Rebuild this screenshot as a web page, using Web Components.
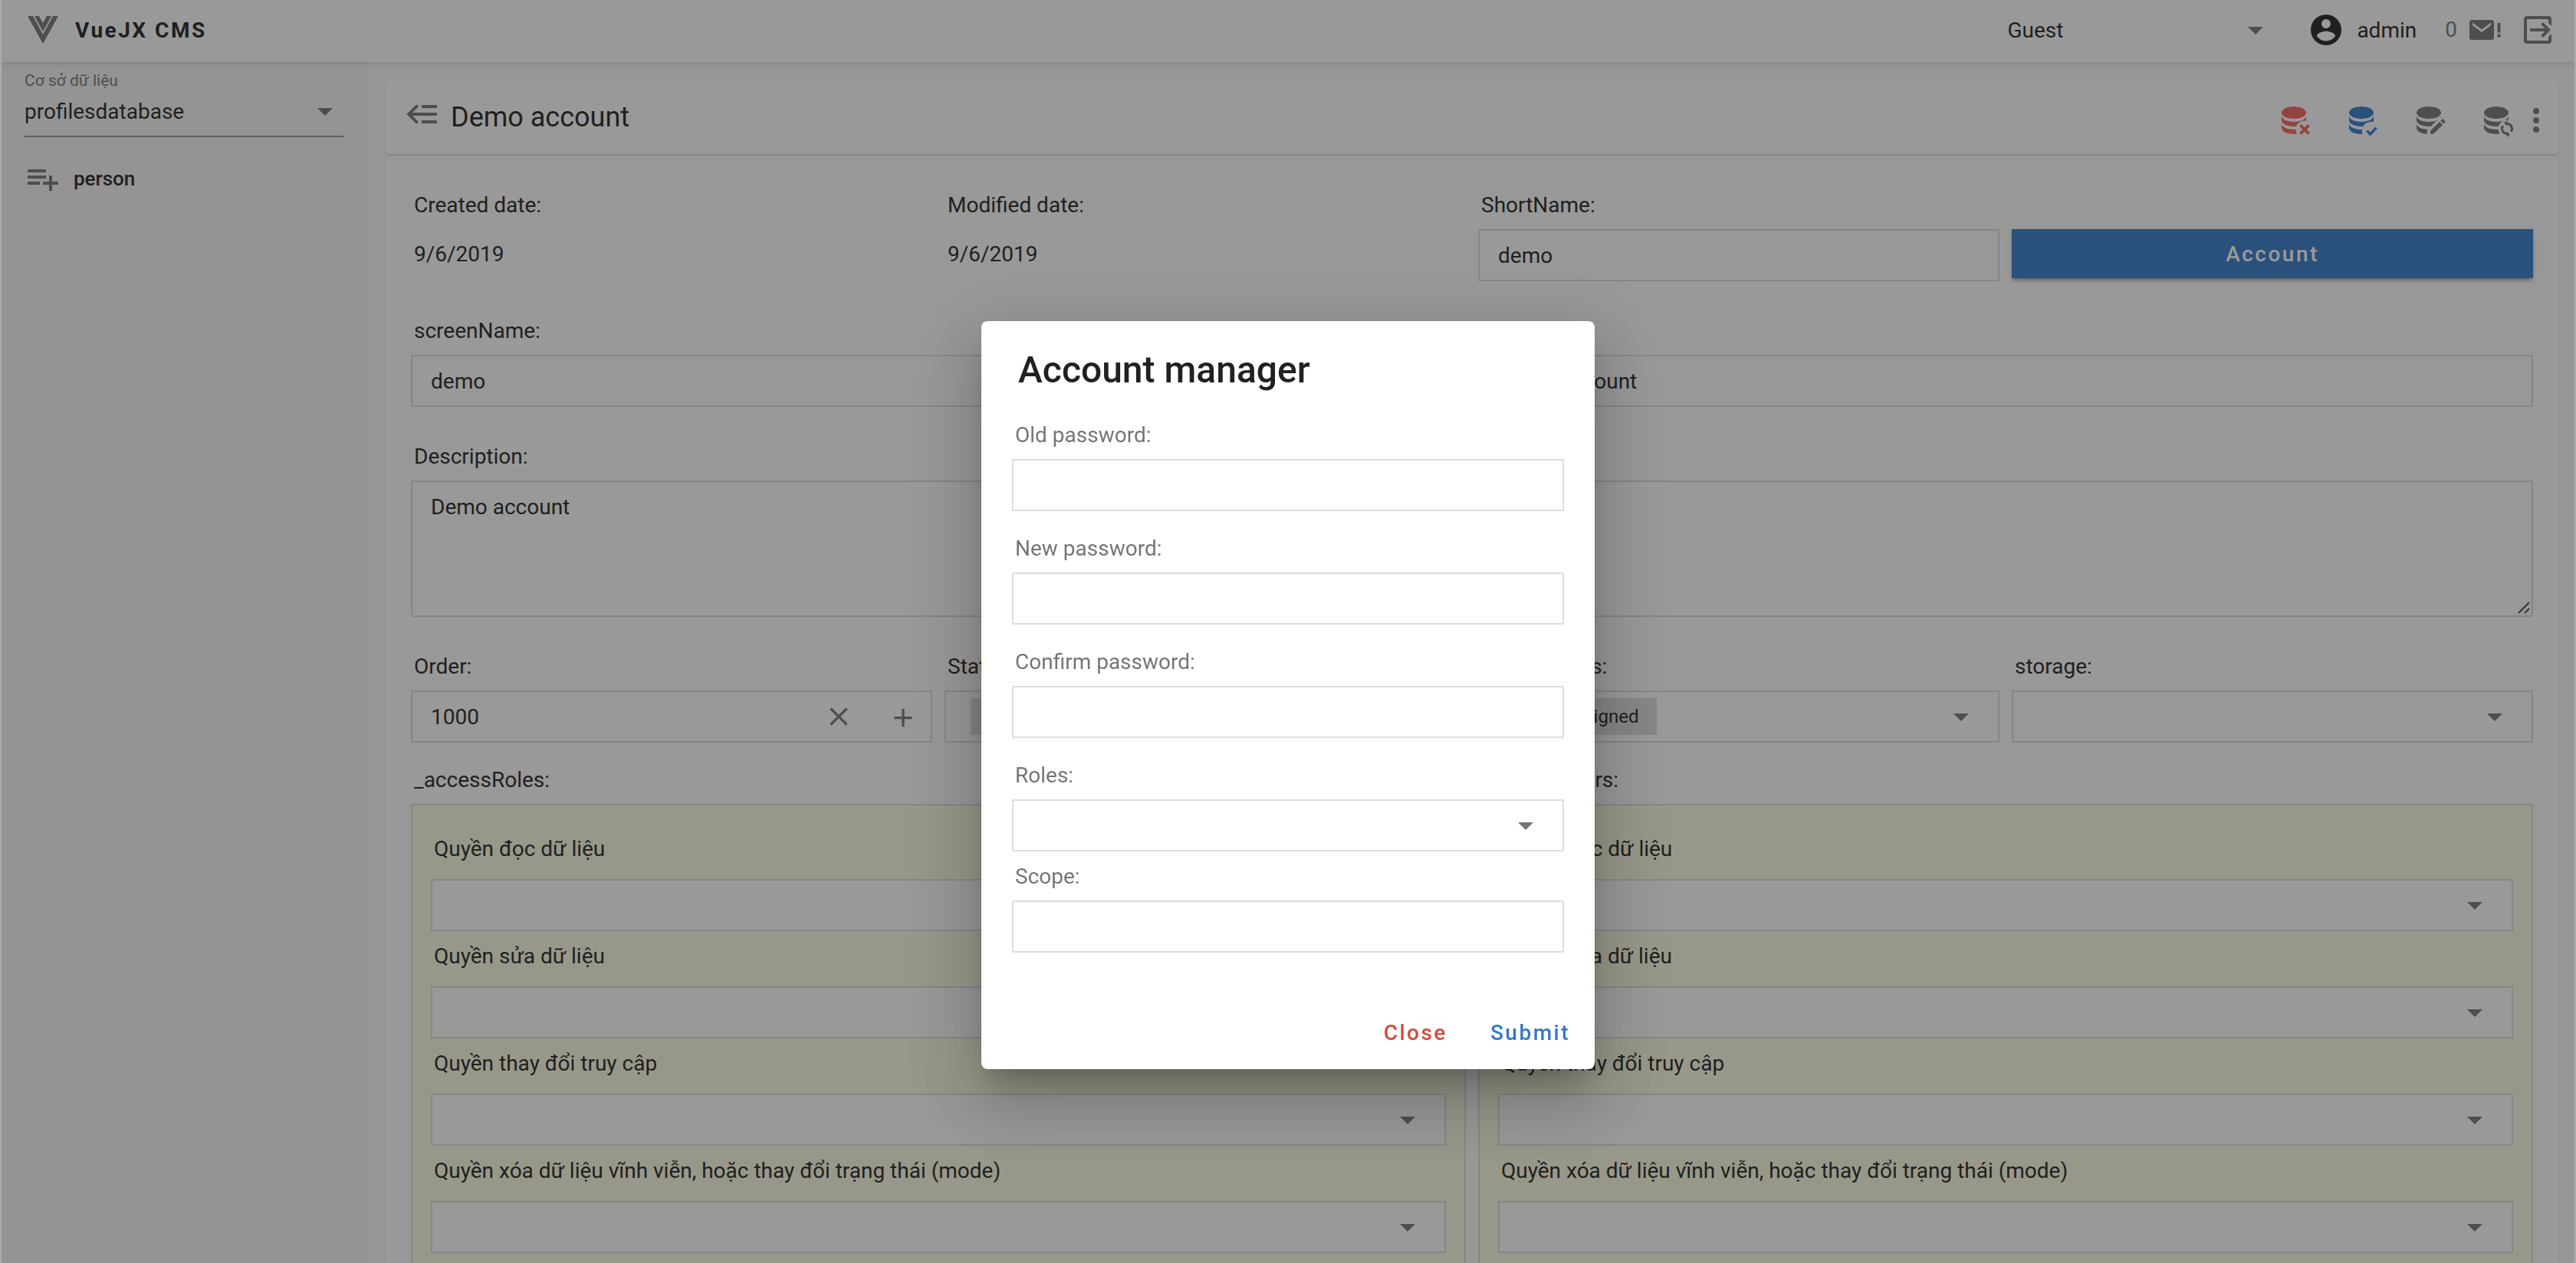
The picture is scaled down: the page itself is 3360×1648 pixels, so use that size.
<!DOCTYPE html>
<html lang="vi">
<head>
<meta charset="utf-8">
<meta name="viewport" content="width=device-width, initial-scale=1">
<title>VueJX CMS</title>
<style>
  html, body { height: 100%; }
  body { margin: 0; background: #ababab; overflow: hidden; font-family: Roboto, "Noto Sans", sans-serif; font-size: 28px; line-height: 32px; color: #212121; }
</style>
</head>
<body>
<cms-app></cms-app>
<script>
const define = (name, css, html, hook) => {
  const tpl = document.createElement('template');
  tpl.innerHTML = `<style>*,*::before,*::after{box-sizing:border-box}${css}</style>${html}`;
  customElements.define(name, class extends HTMLElement {
    constructor() {
      super();
      this.attachShadow({ mode: 'open' }).append(tpl.content.cloneNode(true));
    }
    connectedCallback() {
      if (this.ready) return;
      this.ready = true;
      if (hook) hook(this, this.shadowRoot);
    }
  });
};

/* ---------- icons ---------- */
const DB = 'M12,3C7.58,3 4,4.79 4,7C4,9.21 7.58,11 12,11C16.42,11 20,9.21 20,7C20,4.79 16.42,3 12,3M4,9V12C4,14.21 7.58,16 12,16C16.42,16 20,14.21 20,12V9C20,11.21 16.42,13 12,13C7.58,13 4,11.21 4,9M4,14V17C4,19.21 7.58,21 12,21C16.42,21 20,19.21 20,17V14C20,16.21 16.42,18 12,18C7.58,18 4,16.21 4,14Z';
const db = (cut, badge) => `<mask id="m" maskUnits="userSpaceOnUse" x="0" y="0" width="24" height="24"><rect width="24" height="24" fill="#fff"/><g fill="#000">${cut}</g></mask><path mask="url(#m)" d="${DB}"/>${badge}`;
const ICONS = {
  vue: ['0 0 24 24', '<path d="M2,3H5.5L12,15L18.5,3H22L12,21L2,3M6.5,3H9.5L12,7.58L14.44,3H17.5L12,13.08L6.5,3Z"/>'],
  down: ['0 0 24 24', '<path d="M7,10L12,15L17,10H7Z"/>'],
  playlist: ['0 0 24 24', '<path d="M2,16H10V14H2M18,14V10H16V14H12V16H16V20H18V16H22V14M14,6H2V8H14M14,10H2V12H14V10Z"/>'],
  back: ['0 0 24 24', '<path d="M5,13L9,17L7.6,18.42L1.18,12L7.6,5.58L9,7L5,11H21V13H5M21,6V8H11V6H21M21,16V18H11V16H21Z"/>'],
  account: ['0 0 24 24', '<path d="M12,19.2C9.5,19.2 7.29,17.92 6,16C6.03,14 10,12.9 12,12.9C14,12.9 17.97,14 18,16C16.71,17.92 14.5,19.2 12,19.2M12,5A3,3 0 0,1 15,8A3,3 0 0,1 12,11A3,3 0 0,1 9,8A3,3 0 0,1 12,5M12,2A10,10 0 0,0 2,12A10,10 0 0,0 12,22A10,10 0 0,0 22,12C22,6.47 17.5,2 12,2Z"/>'],
  close: ['0 0 24 24', '<path d="M19,6.41L17.59,5L12,10.59L6.41,5L5,6.41L10.59,12L5,17.59L6.41,19L12,13.41L17.59,19L19,17.59L13.41,12L19,6.41Z"/>'],
  plus: ['0 -1 24 24', '<path d="M19,13H13V19H11V13H5V11H11V5H13V11H19V13Z"/>'],
  dots: ['0 0 24 24', '<circle cx="12" cy="6" r="2"/><circle cx="12" cy="12" r="2"/><circle cx="12" cy="18" r="2"/>'],
  mail: ['0 0 41 26', '<path fill-rule="evenodd" d="M3,0H29A3,3 0 0 1 32,3V23A3,3 0 0 1 29,26H3A3,3 0 0 1 0,23V3A3,3 0 0 1 3,0ZM4,3.6V7L16,16L28,7V3.6L16,12.6Z"/><path d="M36.5,4H40.5V16.5H36.5ZM36.5,18.5H40.5V22.5H36.5Z"/>'],
  logout: ['0 0 36 36', '<path d="M4,0H32A4,4 0 0 1 36,4V13L32,9V4H4V32H32V27L36,23V32A4,4 0 0 1 32,36H4A4,4 0 0 1 0,32V4A4,4 0 0 1 4,0Z"/><path d="M8,16H27.5L22.2,10.7L25,8L35,18L25,28L22.2,25.3L27.5,20H8Z"/>'],
  dbRemove: ['0 0 24 24', db('<circle cx="19" cy="18" r="5.8"/>', '<path d="M16.2,15.2L21.8,20.8M21.8,15.2L16.2,20.8" stroke="currentColor" stroke-width="1.9" fill="none"/>')],
  dbCheck: ['0 0 24 24', db('<circle cx="18.5" cy="19" r="6.1"/>', '<path d="M15.7,18.8L17.8,21L21.8,16.9" stroke="currentColor" stroke-width="1.7" fill="none"/>')],
  dbEdit: ['0 0 24 24', db('<path d="M11,24V18.4L19.2,10.2H24V24Z"/>', '<path transform="translate(1,-.3)" d="M21.7,13.58L20.7,14.58L18.65,12.53L19.65,11.53C19.86,11.32 20.21,11.32 20.42,11.53L21.7,12.81C21.91,13.02 21.91,13.37 21.7,13.58M12,19.19L18.06,13.12L20.11,15.17L14.06,21.23H12V19.19Z"/>')],
  dbSync: ['0 0 24 24', db('<circle cx="19" cy="17.5" r="5.7"/>', '<path d="M19,14.3A3.2,3.2 0 0 1 21.6,19.4M19,20.7A3.2,3.2 0 0 1 16.4,15.6" stroke="currentColor" stroke-width="1.5" fill="none"/><path d="M19.2,12V15.8L17,13.9ZM18.8,19.2V23L21,21.1Z"/>')]
};
define('mdi-icon', `
  :host{display:block;flex:none;width:48px;height:48px;color:#757575;pointer-events:none}
  :host([size="40"]){width:40px;height:40px}
  :host([name="mail"]){width:41px;height:26px}
  :host([name="logout"]){width:36px;height:36px}
  svg{display:block;width:100%;height:100%;fill:currentColor}`,
  `<svg aria-hidden="true"></svg>`,
  (el, root) => {
    const [box, body] = ICONS[el.getAttribute('name')];
    const svg = root.querySelector('svg');
    svg.setAttribute('viewBox', box);
    svg.innerHTML = body;
  });

const RESET = `button,input,select,textarea{font:inherit;color:inherit;background:none;border:0;border-radius:0;margin:0;padding:0;outline:0;appearance:none}
  button{display:block;cursor:pointer} select{cursor:pointer}`;

/* ---------- form fields ---------- */
define('form-field', `${RESET}
  :host{display:flex;flex-direction:column;gap:14px;min-width:0}
  label{padding-left:4px;line-height:34px;white-space:nowrap}
  :host([muted]) label{color:#757575}
  :host([wide-gap]){gap:22px}
  .box{display:flex;align-items:center;height:68px;background:#fff;border:2px solid #ddd;padding-left:24px}
  .box>input,.box>select{flex:1;min-width:0;height:100%}
  .box>mdi-icon{margin-right:24px}
  .actions{display:flex;gap:44px;padding-right:16px}
  .chip{background:#ddd;padding:8px 24px;margin:0 8px;font-size:24px;white-space:nowrap}
  .area{height:178px;padding:0}
  textarea{flex:1;height:100%;padding:16px 24px;line-height:34px;resize:none}
  .grip{align-self:flex-end;width:16px;height:16px;margin:0 2px 2px 0}
  output{display:flex;align-items:center;height:66px;padding-left:4px}`,
  `<label for="c"></label>`,
  (el, root) => {
    const kind = el.getAttribute('kind') || 'text';
    const value = el.getAttribute('value') || '';
    root.querySelector('label').textContent = el.getAttribute('label');
    const arrow = '<mdi-icon name="down"></mdi-icon>';
    const box = document.createElement('div');
    box.className = 'box';
    if (kind === 'date') {
      const out = document.createElement('output');
      out.id = 'c';
      out.textContent = value;
      root.append(out);
      return;
    }
    if (kind === 'select') box.innerHTML = `<select id="c"><option></option></select>${arrow}`;
    if (kind === 'chips') box.innerHTML = `<span class="chip">${value}</span><select id="c"><option></option></select>${arrow}`;
    if (kind === 'text') box.innerHTML = `<input id="c" type="text">`;
    if (kind === 'password') box.innerHTML = `<input id="c" type="password">`;
    if (kind === 'number') box.innerHTML = `<input id="c" type="text" inputmode="numeric"><div class="actions"><button aria-label="Clear"><mdi-icon name="close" size="40"></mdi-icon></button><button aria-label="Add"><mdi-icon name="plus" size="40"></mdi-icon></button></div>`;
    if (kind === 'area') {
      box.classList.add('area');
      box.innerHTML = `<textarea id="c"></textarea><svg class="grip" viewBox="0 0 16 16"><path d="M1,15L15,1M9,15L15,9" stroke="#444" stroke-width="2"/></svg>`;
    }
    const field = box.querySelector('input,textarea');
    if (field) field.value = value;
    root.append(box);
  });

define('solid-button', `${RESET}
  :host{display:flex}
  button{flex:1;height:64px;margin-top:48px;padding-top:2px;background:#3378c9;color:#fff;font-weight:500;letter-spacing:2.5px;
    box-shadow:0 6px 2px -4px rgba(0,0,0,.2),0 4px 4px rgba(0,0,0,.14),0 2px 10px rgba(0,0,0,.12)}`,
  `<button><slot></slot></button>`);

define('text-button', `${RESET}
  :host{display:block;color:#3378c9}
  :host([danger]){color:#d9463b}
  button{height:72px;padding:2px 16px 0;font-weight:500;letter-spacing:2.5px}`,
  `<button><slot></slot></button>`);

/* ---------- role panel ---------- */
define('role-panel', `
  :host{display:flex;flex-direction:column;gap:14px;min-width:0}
  h3{margin:0;font:inherit;line-height:34px;padding-left:4px}
  .panel{display:flex;flex-direction:column;gap:16px;background:#fdfde3;border:2px solid #ddd;padding:40px 24px}`,
  `<h3></h3>
  <div class="panel">
    <form-field wide-gap kind="select" label="Quyền đọc dữ liệu"></form-field>
    <form-field wide-gap kind="select" label="Quyền sửa dữ liệu"></form-field>
    <form-field wide-gap kind="select" label="Quyền thay đổi truy cập"></form-field>
    <form-field wide-gap kind="select" label="Quyền xóa dữ liệu vĩnh viễn, hoặc thay đổi trạng thái (mode)"></form-field>
  </div>`,
  (el, root) => { root.querySelector('h3').textContent = el.getAttribute('label'); });

/* ---------- top bar ---------- */
define('cms-topbar', `${RESET}
  :host{display:flex;align-items:center;height:81px;padding:0 30px 3px;background:#fff;position:relative;z-index:1;
    box-shadow:0 2px 8px rgba(0,0,0,.14)}
  h1{margin:0 auto 0 18px;padding-top:2px;font-size:28px;line-height:32px;font-weight:700;letter-spacing:2.5px}
  .lang{display:flex;align-items:center;width:348px;margin-right:44px}
  .lang select{flex:1;height:48px;margin-right:-48px;padding:2px 48px 0 0}
  .user{display:flex;align-items:center;gap:16px;margin-right:37px}
  .user mdi-icon{color:#212121}
  .user span{padding-top:2px}
  .mail{display:flex;align-items:center;gap:16px;color:#757575;margin-right:30px}`,
  `<mdi-icon name="vue"></mdi-icon>
  <h1>VueJX CMS</h1>
  <div class="lang"><select aria-label="Site"><option>Guest</option></select><mdi-icon name="down"></mdi-icon></div>
  <div class="user"><mdi-icon name="account"></mdi-icon><span>admin</span></div>
  <button class="mail" aria-label="Messages"><span>0</span><mdi-icon name="mail"></mdi-icon></button>
  <button aria-label="Logout"><mdi-icon name="logout"></mdi-icon></button>`);

/* ---------- side bar ---------- */
define('cms-sidebar', `${RESET}
  :host{display:block;width:478px;flex:none;background:#f5f5f5;padding:12px 32px 0 30px}
  label{display:block;font-size:21px;line-height:24px;color:#757575}
  .db{display:flex;align-items:center;padding-bottom:4px;border-bottom:2px solid #949494}
  .db select{flex:1;height:56px;margin-right:-48px;padding:2px 48px 0 0}
  a{display:flex;align-items:center;gap:16px;margin-top:30px;font-size:26px;font-weight:500;color:inherit;text-decoration:none}`,
  `<label for="db">Cơ sở dữ liệu</label>
  <div class="db"><select id="db"><option>profilesdatabase</option></select><mdi-icon name="down"></mdi-icon></div>
  <nav><a href="#person"><mdi-icon name="playlist"></mdi-icon><span>person</span></a></nav>`);

/* ---------- record header ---------- */
define('record-header', `${RESET}
  :host{display:flex;align-items:center;height:98px;padding:0 4px 0 24px;background:#fff;border-bottom:2px solid #ddd}
  .back{margin-bottom:8px}
  h2{margin:0 auto 0 12px;font-size:36px;line-height:48px;font-weight:400}
  .tools{display:flex;gap:40px;padding-top:8px}
  .tools button:last-child{margin-left:-36px}
  .del{color:#f8605a}.save{color:#3378c9}`,
  `<button class="back" aria-label="Back"><mdi-icon name="back"></mdi-icon></button>
  <h2>Demo account</h2>
  <div class="tools">
    <button aria-label="Delete"><mdi-icon class="del" name="dbRemove"></mdi-icon></button>
    <button aria-label="Save"><mdi-icon class="save" name="dbCheck"></mdi-icon></button>
    <button aria-label="Edit"><mdi-icon name="dbEdit"></mdi-icon></button>
    <button aria-label="Refresh"><mdi-icon name="dbSync"></mdi-icon></button>
    <button aria-label="More"><mdi-icon name="dots"></mdi-icon></button>
  </div>`);

/* ---------- record form ---------- */
define('record-form', `
  :host{display:flex;flex-direction:column;gap:48px;background:#fff;padding:48px 32px;border-radius:8px}
  .row{display:grid;grid-template-columns:repeat(4,minmax(0,1fr));align-items:start;gap:16px}
  .half{grid-column:span 2}
  .full{grid-column:span 4}
  .stack{display:flex;flex-direction:column;gap:32px}`,
  `<div class="row">
    <form-field kind="date" label="Created date:" value="9/6/2019"></form-field>
    <form-field kind="date" label="Modified date:" value="9/6/2019"></form-field>
    <form-field label="ShortName:" value="demo"></form-field>
    <solid-button>Account</solid-button>
  </div>
  <div class="row">
    <form-field class="half" label="screenName:" value="demo"></form-field>
    <form-field class="half" label="fullName:" value="Demo account"></form-field>
  </div>
  <div class="row">
    <form-field class="full" kind="area" label="Description:" value="Demo account"></form-field>
  </div>
  <div class="stack">
    <div class="row">
      <form-field kind="number" label="Order:" value="1000"></form-field>
      <form-field kind="chips" label="Status:" value="Active"></form-field>
      <form-field kind="chips" label="accessRoles:" value="User assigned"></form-field>
      <form-field kind="select" label="storage:"></form-field>
    </div>
    <div class="row">
      <role-panel class="half" label="_accessRoles:"></role-panel>
      <role-panel class="half" label="_accessUsers:"></role-panel>
    </div>
  </div>`);

/* ---------- account dialog ---------- */
define('account-dialog', `
  :host{position:fixed;inset:0 2px;z-index:10;display:flex;justify-content:center;align-items:flex-start;padding-top:419px;background:rgba(33,33,33,.46)}
  section{display:flex;flex-direction:column;width:800px;background:#fff;border-radius:8px;padding:36px 40px 12px;
    box-shadow:0 22px 30px -14px rgba(0,0,0,.2),0 48px 76px 6px rgba(0,0,0,.14),0 18px 92px 16px rgba(0,0,0,.12)}
  h2{margin:0 0 40px 8px;font-size:48px;line-height:56px;font-weight:500}
  form{display:flex;flex-direction:column;gap:32px}
  .pair{display:flex;flex-direction:column;gap:16px}
  footer{display:flex;justify-content:flex-end;gap:24px;margin:68px -24px 0 0}`,
  `<section role="dialog" aria-modal="true" aria-labelledby="t">
    <h2 id="t">Account manager</h2>
    <form>
      <form-field muted kind="password" label="Old password:"></form-field>
      <form-field muted kind="password" label="New password:"></form-field>
      <form-field muted kind="password" label="Confirm password:"></form-field>
      <div class="pair">
        <form-field muted kind="select" label="Roles:"></form-field>
        <form-field muted label="Scope:"></form-field>
      </div>
    </form>
    <footer>
      <text-button danger>Close</text-button>
      <text-button>Submit</text-button>
    </footer>
  </section>`);

/* ---------- page shell ---------- */
define('cms-app', `
  :host{display:flex;flex-direction:column;height:100vh;margin:0 2px;background:#fafafa;overflow:hidden}
  .body{display:flex;flex:1;min-height:0}
  main{flex:1;min-width:0;padding:24px 22px 0 24px;overflow:hidden}`,
  `<cms-topbar></cms-topbar>
  <div class="body">
    <cms-sidebar></cms-sidebar>
    <main><record-header></record-header><record-form></record-form></main>
  </div>
  <account-dialog></account-dialog>`);
</script>
</body>
</html>
